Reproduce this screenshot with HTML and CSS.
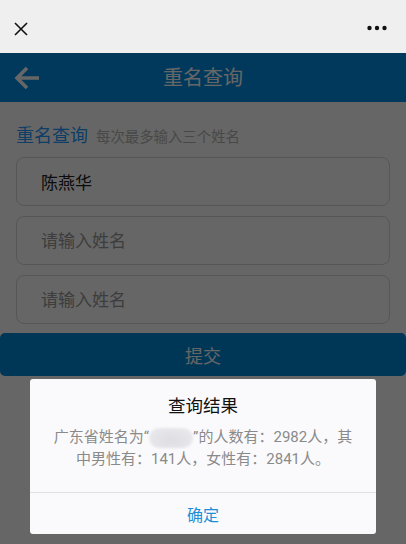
FILE: index.html
```html
<!DOCTYPE html>
<html lang="zh-CN">
<head>
<meta charset="utf-8">
<title>重名查询</title>
<link rel="stylesheet" href="styles.css">
</head>
<body>
<div class="topbar">
  <svg class="close" width="14" height="14" viewBox="0 0 14 14"><path d="M1 1L13 13M13 1L1 13" stroke="#111" stroke-width="1.6" fill="none"/></svg>
  <svg class="more" width="20" height="6" viewBox="0 0 20 6"><circle cx="2.5" cy="3" r="2.2" fill="#111"/><circle cx="10" cy="3" r="2.2" fill="#111"/><circle cx="17.5" cy="3" r="2.2" fill="#111"/></svg>
</div>
<div class="page">
  <header class="header">
    <svg class="back" width="26" height="24" viewBox="0 0 26 24"><path d="M2.5 12H25M13 2L3 12L13 22" stroke="#fff" stroke-width="3.6" fill="none" stroke-linejoin="miter"/></svg>
    <h1 class="title">重名查询</h1>
    <span></span>
  </header>
  <form class="form">
    <div class="label-row">
      <span class="label">重名查询</span>
      <span class="hint">每次最多输入三个姓名</span>
    </div>
    <input class="field" type="text" value="陈燕华">
    <input class="field" type="text" placeholder="请输入姓名">
    <input class="field" type="text" placeholder="请输入姓名">
  </form>
  <button class="submit" type="button">提交</button>
</div>
<div class="overlay">
  <div class="dialog">
    <div class="dialog-body">
      <div class="dialog-title">查询结果</div>
      <p class="dialog-text"><span>广东省姓名为“</span><span class="blur"></span><span>”的人数有：2982人，其</span><br><span>中男性有：141人，女性有：2841人。</span></p>
    </div>
    <div class="dialog-actions">确定</div>
  </div>
</div>
</body>
</html>
```
FILE: styles.css
```css
* { box-sizing: border-box; }
html, body { margin: 0; padding: 0; }
body {
  width: 406px;
  height: 544px;
  overflow: hidden;
  background: #fff;
  font-family: Roboto, "Noto Sans CJK SC", sans-serif;
}
.topbar {
  height: 53px;
  background: #efefef;
  display: flex;
  align-items: center;
  justify-content: space-between;
  padding: 0 19px 0 14px;
}
.close { margin-top: 4px; }
.more { margin-top: 3px; }
.header {
  height: 49px;
  background: #0090e6;
  display: grid;
  grid-template-columns: 60px 1fr 60px;
  align-items: center;
}
.back { margin-left: 14px; }
.title {
  margin: 0;
  text-align: center;
  color: #fff;
  font-size: 20px;
  font-weight: normal;
  line-height: 26px;
}
.form {
  margin: 0;
  padding: 21px 16px 0;
  display: flex;
  flex-direction: column;
  gap: 10px;
}
.label-row {
  display: flex;
  align-items: baseline;
  gap: 8px;
  line-height: 26px;
  margin-bottom: -4px;
}
.label { color: #1f9bff; font-size: 18px; }
.hint { color: #b5b5b5; font-size: 14.4px; }
.field {
  display: block;
  width: 100%;
  height: 49px;
  margin: 0;
  padding: 0 24px;
  border: 1px solid #d8d8d8;
  border-radius: 8px;
  background: #fff;
  font-family: inherit;
  font-size: 17px;
  color: #222;
  outline: none;
}
.field::placeholder { color: #999; }
.submit {
  display: block;
  width: 100%;
  height: 43px;
  margin: 9px 0 0;
  border: 0;
  border-radius: 5px;
  background: #008ad8;
  color: #fff;
  font-family: inherit;
  font-size: 18px;
}
.overlay {
  position: fixed;
  top: 53px;
  left: 0;
  right: 0;
  bottom: 0;
  background: rgba(0, 0, 0, 0.6);
  display: flex;
  align-items: flex-end;
  justify-content: center;
  padding-bottom: 10px;
}
.dialog {
  width: 346px;
  background: #fafafc;
  border-radius: 3px;
}
.dialog-body {
  padding: 15px 20px 22px;
  text-align: center;
}
.dialog-title {
  font-size: 17.5px;
  line-height: 24px;
  color: #111;
}
.dialog-text {
  margin: 8px 0 0;
  font-size: 15px;
  line-height: 22px;
  color: #8a8a8a;
}
.blur {
  display: inline-block;
  width: 44px;
  height: 20px;
  vertical-align: middle;
  border-radius: 10px;
  background: radial-gradient(ellipse at 50% 60%, #dedee2 0, #e4e4e8 45%, #ececf0 100%);
  filter: blur(1px);
}
.dialog-actions {
  height: 42px;
  border-top: 1px solid #e2e2e4;
  display: flex;
  align-items: center;
  justify-content: center;
  color: #1c8fd6;
  font-size: 16px;
}
```
